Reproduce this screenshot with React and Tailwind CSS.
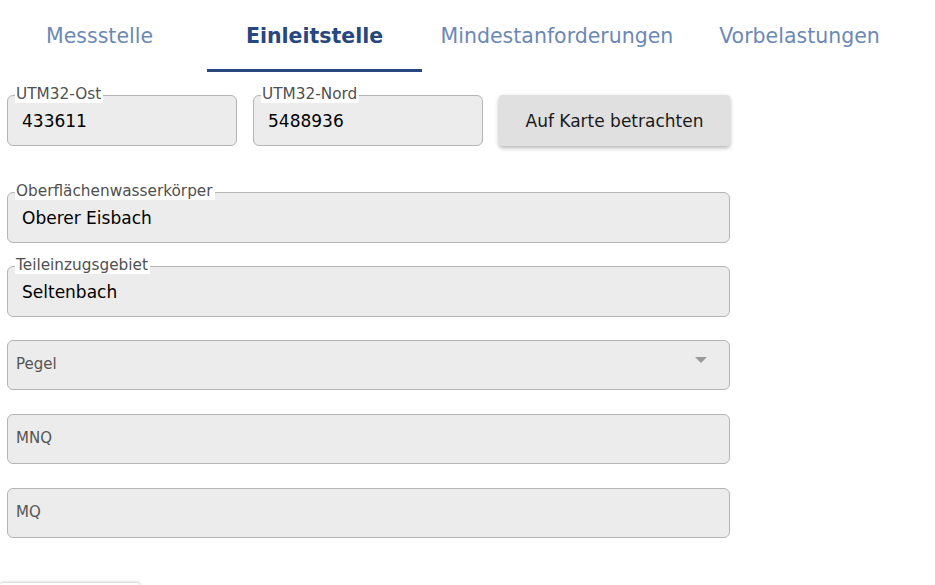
import { useState } from "react";

const tabs = [
  { label: "Messstelle", w: "w-[199px] mr-[8px]" },
  { label: "Einleitstelle", w: "w-[215px]" },
  { label: "Mindestanforderungen", w: "w-[270px]" },
  { label: "Vorbelastungen", w: "w-[215px]" },
];

function Field({ label, value, className = "" }) {
  return (
    <div className={`relative ${className}`}>
      <div className="h-[51px] rounded-[6px] border border-[#b4b4b4] bg-[#ececec] flex items-center pl-[14px] pt-[3px] text-[17px] text-black">
        {value}
      </div>
      <span className="absolute left-[8px] top-[-10px] bg-white pr-[2px] pl-[1px] text-[15.3px] leading-[18px] text-[#505050]">
        {label}
      </span>
    </div>
  );
}

function EmptyField({ placeholder, select }) {
  return (
    <div className="h-[50px] rounded-[6px] border border-[#b4b4b4] bg-[#ececec] flex items-center justify-between pl-[8px] pr-[22px] pb-[2px] text-[15px] text-[#555]">
      <span>{placeholder}</span>
      {select && (
        <svg width="12" height="7" viewBox="0 0 12 7" className="mb-[7px]">
          <path d="M0 0 L12 0 L6 6 Z" fill="#9a9a9a" />
        </svg>
      )}
    </div>
  );
}

export default function App() {
  const [active, setActive] = useState(1);

  return (
    <div
      className="w-[935px] h-[585px] overflow-hidden bg-white"
      style={{ fontFamily: '"DejaVu Sans", Verdana, sans-serif' }}
    >
      <div className="flex h-[72px]">
        {tabs.map((t, i) => (
          <button
            key={t.label}
            onClick={() => setActive(i)}
            className={`${t.w} h-full flex items-center justify-center pt-[3px] text-[20.5px] border-b-[3px] ${
              i === active
                ? "border-[#27477e] text-[#27477e] font-bold"
                : "border-transparent text-[#6c88b6]"
            }`}
          >
            {t.label}
          </button>
        ))}
      </div>

      <div className="pl-[7px] w-[730px]">
        <div className="flex items-start gap-[16px] mt-[23px]">
          <Field label="UTM32-Ost" value="433611" className="w-[230px]" />
          <Field label="UTM32-Nord" value="5488936" className="w-[230px]" />
          <button className="w-[231px] h-[51px] rounded-[4px] bg-[#e0e0e0] pt-[2px] text-[17px] text-[#1a1a1a] shadow-[0_2px_4px_rgba(0,0,0,0.3)]">
            Auf Karte betrachten
          </button>
        </div>

        <Field label="Oberflächenwasserkörper" value="Oberer Eisbach" className="mt-[46px]" />
        <Field label="Teileinzugsgebiet" value="Seltenbach" className="mt-[23px]" />

        <div className="mt-[23px] flex flex-col gap-[24px]">
          <EmptyField placeholder="Pegel" select />
          <EmptyField placeholder="MNQ" />
          <EmptyField placeholder="MQ" />
        </div>
      </div>

      <div className="mt-[45px] w-[140px] h-[20px] bg-white rounded-[3px] shadow-[0_-1px_3px_rgba(0,0,0,0.2)]" />
    </div>
  );
}
